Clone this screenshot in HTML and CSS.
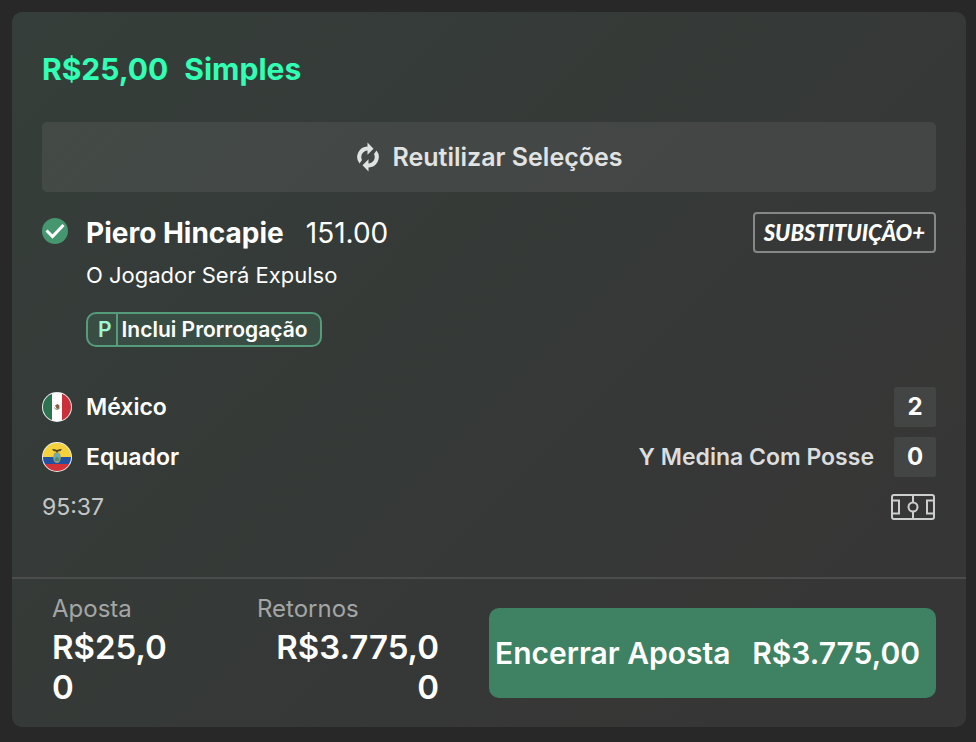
FILE: index.html
```html
<!DOCTYPE html>
<html lang="pt-BR">
<head>
    <meta charset="UTF-8">
    <meta name="viewport" content="width=device-width, initial-scale=1.0">
    <title>Minhas Apostas</title>
    <link rel="stylesheet" href="styles.css">
</head>
<body>
    <main class="bet-card">
        <div class="bet-body">
            <h1 class="bet-title"><span>R$25,00</span><span>Simples</span></h1>

            <button class="reuse-button" type="button">
                <svg class="reuse-icon" viewBox="0 0 24 30" aria-hidden="true">
                    <path d="M3.500 21.500A10.500 10.500 0 0 1 11.500 4.500V0.500l6 6.200-6 6V8.500A6.500 6.500 0 0 0 6 18z"/>
                    <path d="M20.500 8.500A10.500 10.500 0 0 1 12.500 25.500v4l-6-6.200 6-6V21.500A6.500 6.500 0 0 0 18 12z"/>
                </svg>
                Reutilizar Seleções
            </button>

            <!-- Selection -->
            <section class="selection">
                <svg class="check-icon" viewBox="0 0 26 26" aria-hidden="true">
                    <circle cx="13" cy="13" r="13"/>
                    <path d="M4.500 12.500l6 6L21.500 7"/>
                </svg>
                <div class="selection-info">
                    <div class="selection-head">
                        <h2 class="selection-name">Piero Hincapie</h2>
                        <span class="selection-odds">151.00</span>
                        <span class="sub-badge">SUBSTITUIÇÃO+</span>
                    </div>
                    <p class="market">O Jogador Será Expulso</p>
                    <div class="tag">
                        <span class="tag-letter">P</span>
                        <span class="tag-text">Inclui Prorrogação</span>
                    </div>
                </div>
            </section>

            <!-- Score -->
            <section class="match">
                <div class="team">
                    <svg class="flag" viewBox="0 0 30 30" aria-hidden="true">
                        <clipPath id="mexico"><circle cx="15" cy="15" r="14"/></clipPath>
                        <circle cx="15" cy="15" r="15" fill="#eceeed"/>
                        <g clip-path="url(#mexico)">
                            <path fill="#2c7350" d="M0 0h10v30H0z"/>
                            <path fill="#fff" d="M10 0h10v30H10z"/>
                            <path fill="#c9303c" d="M20 0h10v30H20z"/>
                            <path fill="none" stroke="#7f9a72" d="M12.500 15.500a2.700 2.700 0 0 0 5.200 0"/>
                            <path fill="#8a5f48" d="M13 13.500l2.500-1.500 2 1.500-.5 3-2 .5-1-1.500z"/>
                        </g>
                    </svg>
                    <span class="team-name">México</span>
                    <span class="score">2</span>
                </div>
                <div class="team">
                    <svg class="flag" viewBox="0 0 30 30" aria-hidden="true">
                        <clipPath id="ecuador"><circle cx="15" cy="15" r="14"/></clipPath>
                        <circle cx="15" cy="15" r="15" fill="#eceeed"/>
                        <g clip-path="url(#ecuador)">
                            <path fill="#f5d23c" d="M0 0h30v15H0z"/>
                            <path fill="#2450a0" d="M0 15h30v7H0z"/>
                            <path fill="#d23238" d="M0 22h30v8H0z"/>
                            <ellipse cx="15" cy="15.500" rx="3.800" ry="5.500" fill="#a59b5b"/>
                            <ellipse cx="15" cy="15.500" rx="2.800" ry="4.500" fill="#63afc1"/>
                            <path fill="#548c68" d="M12.500 17l2.500-2.500 2.500 2.500-1 2h-3z"/>
                            <path fill="#514629" d="M10 7q3 0 5 1 2-1 5-1-1 2.500-4 2.500l-1 1.500-1-1.500Q11 9.500 10 7z"/>
                        </g>
                    </svg>
                    <span class="team-name">Equador</span>
                    <span class="possession">Y Medina Com Posse</span>
                    <span class="score">0</span>
                </div>
                <div class="match-status">
                    <time class="clock">95:37</time>
                    <svg class="pitch-icon" viewBox="0 0 45 26" role="img" aria-label="Campo">
                        <rect x="1" y="1" width="42" height="24" rx="2"/>
                        <path d="M22 1v7.500M22 17.500v7.500M2 6.500h6v13H2M42 6.500h-6v13h6"/>
                        <circle cx="22" cy="13" r="4.500"/>
                    </svg>
                </div>
            </section>
        </div>

        <!-- Stake, returns and cash out -->
        <footer class="bet-footer">
            <div class="amount">
                <span class="amount-label">Aposta</span>
                <span class="amount-value">R$25,00</span>
            </div>
            <div class="amount returns">
                <span class="amount-label">Retornos</span>
                <span class="amount-value">R$3.775,00</span>
            </div>
            <button class="cashout-button" type="button">
                <span>Encerrar Aposta</span><span>R$3.775,00</span>
            </button>
        </footer>
    </main>
</body>
</html>
```

FILE: styles.css
```css
* {
    box-sizing: border-box;
}
body {
    font-family: Inter, "Liberation Sans", sans-serif;
    background-color: #282828;
    color: #fff;
    margin: 0;
    padding: 12px 10px 15px 12px;
}
h1, h2, p {
    margin: 0;
}
button {
    font-family: inherit;
    border: none;
    cursor: pointer;
}
.bet-card {
    background: linear-gradient(135deg, #353e3a 0%, #353937 50%, #373636 85%);
    border-radius: 10px;
    overflow: hidden;
}
.bet-body {
    padding: 37px 30px 50px;
}
.bet-title {
    display: flex;
    gap: 16px;
    color: #30ffb4;
    font-size: 30px;
    font-weight: 700;
    line-height: 40px;
}
.reuse-button {
    display: flex;
    align-items: center;
    justify-content: center;
    gap: 13px;
    width: 100%;
    height: 70px;
    margin: 33px 0 20px;
    background-color: rgba(255, 255, 255, 0.07);
    border-radius: 5px;
    color: #e1e3e2;
    font-size: 25px;
    font-weight: 600;
}
.reuse-icon {
    width: 24px;
    height: 30px;
    fill: #e1e3e2;
}
.selection {
    display: flex;
    gap: 18px;
}
.check-icon {
    flex: none;
    width: 26px;
    height: 26px;
    margin-top: 6px;
}
.check-icon circle {
    fill: #46966f;
}
.check-icon path {
    fill: none;
    stroke: #fff;
    stroke-width: 3;
}
.selection-info {
    flex: 1;
}
.selection-head {
    display: flex;
    align-items: center;
    gap: 22px;
    line-height: 40px;
}
.selection-name {
    font-size: 28px;
    font-weight: 700;
}
.selection-odds {
    font-size: 28px;
}
.sub-badge {
    margin-left: auto;
    padding: 0 9px;
    border: 2px solid #858887;
    border-radius: 4px;
    font-family: Lato, sans-serif;
    font-size: 22px;
    font-style: italic;
    font-weight: 900;
    line-height: 37px;
}
.market {
    margin-top: 7px;
    font-size: 22px;
    line-height: 30px;
}
.tag {
    display: inline-flex;
    margin-top: 22px;
    border: 2px solid #559c7d;
    border-radius: 10px;
    background-color: #3a4d44;
    font-size: 21px;
    font-weight: 600;
    line-height: 31px;
}
.tag-letter {
    padding: 0 4px 0 10px;
    border-right: 2px solid #559c7d;
    color: #9cfad2;
}
.tag-text {
    padding: 0 13px 0 4px;
}
.match {
    display: flex;
    flex-direction: column;
    gap: 10px;
    margin-top: 40px;
}
.team {
    display: flex;
    align-items: center;
    font-size: 23px;
    font-weight: 600;
}
.flag {
    width: 30px;
    height: 30px;
    margin-right: 14px;
}
.team-name {
    margin-right: auto;
}
.possession {
    margin-right: 20px;
    color: #dcdddd;
}
.score {
    width: 42px;
    background-color: #434444;
    border-radius: 2px;
    font-size: 24px;
    font-weight: 700;
    line-height: 40px;
    text-align: center;
}
.match-status {
    display: flex;
    align-items: center;
    justify-content: space-between;
}
.clock {
    color: #c5c7c6;
    font-size: 23px;
    line-height: 40px;
}
.pitch-icon {
    width: 45px;
    height: 26px;
    fill: none;
    stroke: #cccdcd;
    stroke-width: 2;
}
.bet-footer {
    display: grid;
    grid-template-columns: 155fr 182fr 447fr;
    gap: 50px;
    padding: 11px 30px 20px 40px;
    border-top: 2px solid #4a4d4c;
}
.amount {
    display: flex;
    flex-direction: column;
    min-width: 0;
    padding-right: 30px;
}
.amount-label {
    color: #a4a6a5;
    font-size: 24px;
    line-height: 37px;
}
.amount-value {
    font-size: 33px;
    font-weight: 600;
    line-height: 40px;
    overflow-wrap: anywhere;
}
.returns {
    padding-right: 0;
}
.returns .amount-value {
    text-align: right;
}
.cashout-button {
    display: flex;
    align-items: center;
    justify-content: space-between;
    height: 90px;
    margin-top: 18px;
    padding: 0 16px 0 6px;
    background-color: #3e8263;
    border-radius: 10px;
    color: #fff;
    font-size: 30px;
    font-weight: 600;
    white-space: nowrap;
}
```
